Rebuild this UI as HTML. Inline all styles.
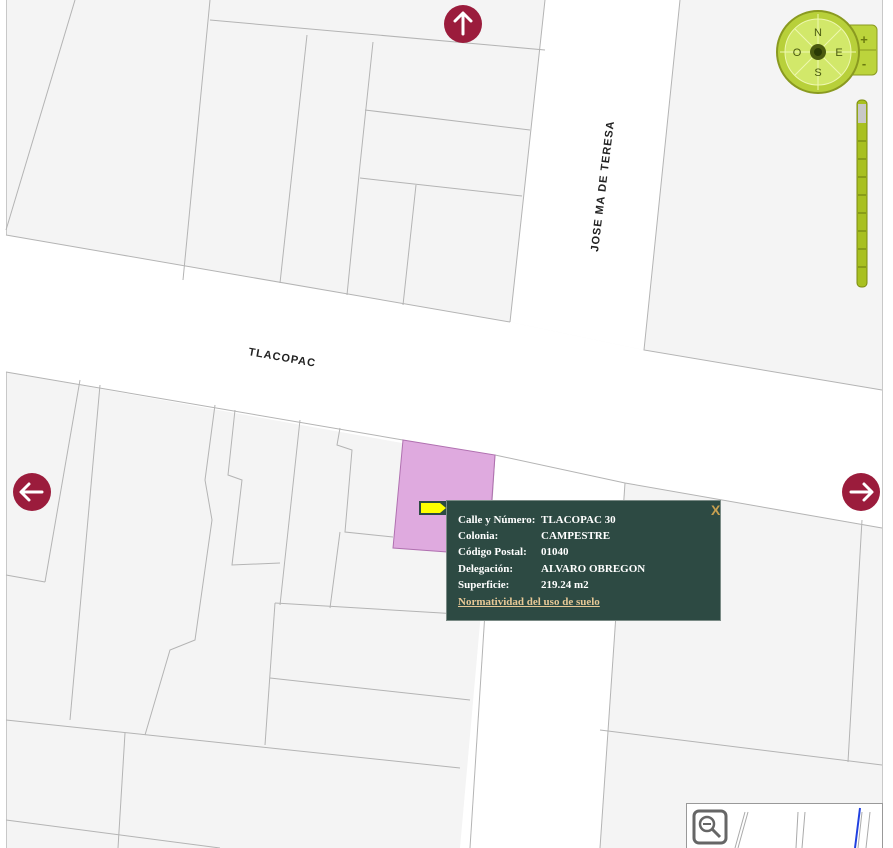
<!DOCTYPE html>
<html><head><meta charset="utf-8"><style>
html,body{margin:0;padding:0;background:#fff;}
body{width:893px;height:848px;overflow:hidden;position:relative;font-family:"Liberation Sans",sans-serif;}
#map{position:absolute;left:0;top:0;}
.pop{position:absolute;left:446px;top:500px;width:275px;height:121px;background:#2d4a43;border:1px solid #7a8a85;box-sizing:border-box;font-family:"Liberation Serif",serif;font-weight:bold;font-size:11px;color:#fff;}
.pop .r{position:absolute;left:11px;}
.pop .v{position:absolute;left:94px;}
.pop a{color:#e6c896;text-decoration:underline;}
.x{position:absolute;left:264px;top:1px;color:#c8a050;font-size:14px;font-family:"Liberation Sans",sans-serif;}
</style></head><body>
<svg id="map" width="893" height="848" viewBox="0 0 893 848">
<rect x="6" y="0" width="876" height="848" fill="#f4f4f4"/>
<line x1="6.5" y1="0" x2="6.5" y2="848" stroke="#c8c8c8"/>
<line x1="882.5" y1="0" x2="882.5" y2="848" stroke="#c8c8c8"/>
<g fill="#fff">
<polygon points="6,235 510,322 644,350 882,390 882,528 625,483 6,372"/>
<polygon points="545,0 680,0 644,350 510,322"/>
<polygon points="495,455 625,483 600,848 460,848"/>
</g>
<g fill="none" stroke="#b4b4b4" stroke-width="1">
<polyline points="6,235 510,322"/><polyline points="545,0 510,322"/>
<polyline points="680,0 644,350 882,390"/>
<polyline points="75,0 6,230"/>
<polyline points="210,0 183,280"/><polyline points="210,20 545,50"/>
<polyline points="307,35 280,283"/><polyline points="373,42 360,165 347,295"/>
<polyline points="365,110 530,130"/><polyline points="360,178 522,196"/>
<polyline points="416,185 403,305"/>
<polyline points="6,372 403,440"/><polyline points="495,455 625,483 882,528"/>
<polyline points="80,380 45,582"/><polyline points="100,385 70,720"/>
<polyline points="6,575 45,582"/>
<polyline points="215,405 205,480 212,520 195,640 170,650 145,735"/>
<polyline points="235,410 228,475 242,480 232,565 280,563"/>
<polyline points="300,420 280,605"/>
<polyline points="340,428 337,445 352,450 345,532 393,537"/>
<polyline points="340,532 330,608"/>
<polyline points="275,603 475,615"/><polyline points="270,678 470,700"/>
<polyline points="275,603 265,745"/>
<polyline points="6,720 460,768"/><polyline points="125,733 118,848"/>
<polyline points="6,820 220,848"/>
<polyline points="495,455 470,848"/><polyline points="625,483 600,848"/>
<polyline points="862,520 848,762"/><polyline points="600,730 882,765"/>
</g>
<polygon points="403,440 495,455 488,555 393,548" fill="#dfaadf" stroke="#b070b0"/>
<text x="248" y="355" transform="rotate(10 248 355)" font-size="11" fill="#222" font-weight="bold" letter-spacing="1">TLACOPAC</text>
<text x="598" y="252" transform="rotate(-83 598 252)" font-size="11" fill="#222" font-weight="bold" letter-spacing="1">JOSE MA DE TERESA</text>
<g fill="#9b1c3c">
<circle cx="463" cy="24" r="19"/><circle cx="32" cy="492" r="19"/><circle cx="861" cy="492" r="19"/>
</g>
<g stroke="#fff" stroke-width="3" fill="none" stroke-linecap="round" stroke-linejoin="round">
<path d="M463 34V14M455 21L463 13L471 21"/>
<path d="M42 492H22M29 484L21 492L29 500"/>
<path d="M851 492H871M864 484L872 492L864 500"/>
</g>
<rect x="419" y="501" width="28" height="14" fill="#2d4a43"/>
<polygon points="421,503 440,503 446,508 440,513 421,513" fill="#ffff00"/>
<rect x="843" y="25" width="34" height="50" rx="5" fill="#bcd43c" stroke="#8a9a20"/>
<line x1="852" y1="50" x2="876" y2="50" stroke="#8a9a20"/>
<text x="864" y="44" font-size="13" fill="#6a7a10" font-weight="bold" text-anchor="middle">+</text>
<text x="864" y="68" font-size="13" fill="#6a7a10" font-weight="bold" text-anchor="middle">-</text>
<circle cx="818" cy="52" r="41" fill="#b8d03a" stroke="#8a9a20" stroke-width="2"/>
<circle cx="818" cy="52" r="33" fill="#d2e86a" stroke="#eef7b0"/>
<g stroke="#eef7b0"><line x1="818" y1="14" x2="818" y2="90"/><line x1="780" y1="52" x2="856" y2="52"/><line x1="795" y1="29" x2="841" y2="75"/><line x1="841" y1="29" x2="795" y2="75"/></g>
<circle cx="818" cy="52" r="8" fill="#4a5a10"/><circle cx="818" cy="52" r="4" fill="#2a3a05"/>
<g font-size="11" fill="#4a5a10" text-anchor="middle"><text x="818" y="36">N</text><text x="818" y="76">S</text><text x="797" y="56">O</text><text x="839" y="56">E</text></g>
<rect x="857" y="100" width="10" height="187" rx="4" fill="#a8c020" stroke="#7a8a10"/>
<rect x="858" y="104" width="8" height="19" fill="#c8c8c8"/>
<g stroke="#6a7a10"><line x1="858" y1="141" x2="866" y2="141"/><line x1="858" y1="159" x2="866" y2="159"/><line x1="858" y1="177" x2="866" y2="177"/><line x1="858" y1="195" x2="866" y2="195"/><line x1="858" y1="213" x2="866" y2="213"/><line x1="858" y1="231" x2="866" y2="231"/><line x1="858" y1="249" x2="866" y2="249"/><line x1="858" y1="267" x2="866" y2="267"/></g>
<rect x="686.5" y="803.5" width="196" height="50" fill="#fff" stroke="#999"/>
<g stroke="#aaa" fill="none"><path d="M745 812L735 848M748 812L738 848M798 812L796 848M805 812L802 848M862 812L858 848M870 812L866 848"/></g>
<path d="M860 808L855 848" stroke="#2040e0" stroke-width="2"/>
<rect x="694" y="811" width="32" height="32" rx="5" fill="#fff" stroke="#666" stroke-width="3"/>
<circle cx="707" cy="824" r="7" fill="none" stroke="#666" stroke-width="2.5"/>
<line x1="703" y1="824" x2="711" y2="824" stroke="#666" stroke-width="2"/>
<line x1="712" y1="829" x2="720" y2="837" stroke="#666" stroke-width="3"/>
</svg>
<div class="pop">
<div class="x">X</div>
<div class="r" style="top:13px">Calle y Número:</div><div class="v" style="top:13px">TLACOPAC 30</div>
<div class="r" style="top:29px">Colonia:</div><div class="v" style="top:29px">CAMPESTRE</div>
<div class="r" style="top:45px">Código Postal:</div><div class="v" style="top:45px">01040</div>
<div class="r" style="top:62px">Delegación:</div><div class="v" style="top:62px">ALVARO OBREGON</div>
<div class="r" style="top:78px">Superficie:</div><div class="v" style="top:78px">219.24 m2</div>
<div class="r" style="top:95px"><a>Normatividad del uso de suelo</a></div>
</div>
</body></html>
